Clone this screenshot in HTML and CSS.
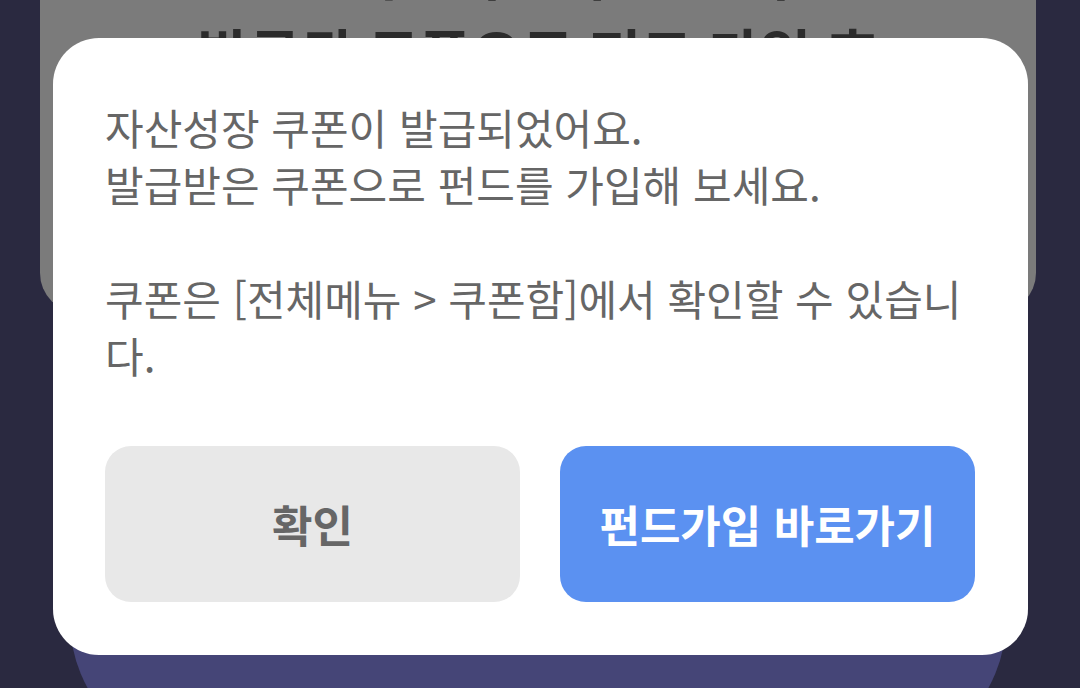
FILE: index.html
```html
<!DOCTYPE html>
<html lang="ko">
<head>
    <meta charset="UTF-8">
    <meta name="viewport" content="width=device-width, initial-scale=1.0">
    <title>쿠폰 발급 안내</title>
    <link rel="stylesheet" href="styles.css">
</head>
<body>
    <div class="page">
        <div class="event-card">
            <p>펀드 가입하고 쿠폰 받아요</p>
            <p>발급된 쿠폰으로 펀드 가입 후</p>
        </div>
        <div class="bottom-panel"></div>
    </div>

    <div class="dialog">
        <div class="dialog-text">
            <p>자산성장 쿠폰이 발급되었어요.<br>발급받은 쿠폰으로 펀드를 가입해 보세요.</p>
            <p>쿠폰은 [전체메뉴 &gt; 쿠폰함]에서 확인할 수 있습니다.</p>
        </div>
        <div class="dialog-buttons">
            <button class="btn btn-cancel">확인</button>
            <button class="btn btn-primary">펀드가입 바로가기</button>
        </div>
    </div>
</body>
</html>
```

FILE: styles.css
```css
body {
    margin: 0;
    height: 688px;
    overflow: hidden;
    background-color: #2a2940;
    font-family: "Noto Sans CJK KR", "Noto Sans", sans-serif;
    position: relative;
}
p {
    margin: 0;
}
.page {
    height: 688px;
    overflow: hidden;
    padding: 0 44px 0 40px;
}
.event-card {
    margin-top: -70px;
    height: 383px;
    background-color: #7b7b7b;
    border-radius: 0 0 40px 40px;
    text-align: center;
    color: #2b2b2b;
    font-size: 56px;
    font-weight: 700;
    line-height: 81px;
}
.bottom-panel {
    margin: 247px 30px 0 30px;
    height: 200px;
    background-color: #454577;
    border-radius: 0 0 140px 140px;
}
.dialog {
    position: absolute;
    left: 53px;
    top: 38px;
    width: 975px;
    height: 617px;
    box-sizing: border-box;
    padding: 60px 53px 53px 52px;
    background-color: #ffffff;
    border-radius: 46px;
    display: flex;
    flex-direction: column;
}
.dialog-text {
    color: #666666;
    font-size: 42px;
    line-height: 57px;
    word-break: break-all;
}
.dialog-text p + p {
    margin-top: 57px;
}
.dialog-buttons {
    display: flex;
    gap: 40px;
    margin-top: auto;
}
.btn {
    flex: 1;
    height: 156px;
    border: none;
    border-radius: 26px;
    font-family: inherit;
    font-size: 44px;
    font-weight: 700;
    cursor: pointer;
}
.btn-cancel {
    background-color: #e8e8e8;
    color: #666666;
}
.btn-primary {
    background-color: #5b91f1;
    color: #ffffff;
}
```
